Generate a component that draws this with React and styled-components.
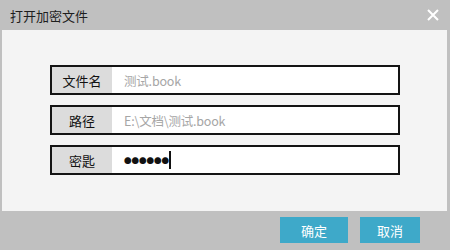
import React from 'react';
import styled, { createGlobalStyle } from 'styled-components';

const GlobalStyle = createGlobalStyle`
    html, body {
        margin: 0;
        padding: 0;
        background: #c0c0c0;
    }
    body {
        font-family: "Noto Sans CJK SC", "Noto Sans", sans-serif;
    }
`;

const fields = [
    { label: '文件名', value: '测试.book' },
    { label: '路径', value: 'E:\\文档\\测试.book' },
    { label: '密匙', secret: true },
];

function App() {
    return (
        <>
            <GlobalStyle />
            <Dialog>
                <TitleBar>
                    <span>打开加密文件</span>
                    <CloseButton aria-label="close">
                        <svg width="12" height="12" viewBox="0 0 12 12">
                            <path d="M1 1 L11 11 M11 1 L1 11" stroke="#fff" strokeWidth="2" />
                        </svg>
                    </CloseButton>
                </TitleBar>
                <Body>
                    {fields.map((f) => (
                        <FieldRow key={f.label}>
                            <Label>{f.label}</Label>
                            {f.secret ? (
                                <Value>
                                    <Dots>●●●●●●</Dots>
                                    <Caret />
                                </Value>
                            ) : (
                                <Value muted>{f.value}</Value>
                            )}
                        </FieldRow>
                    ))}
                </Body>
                <Footer>
                    <Button wide>确定</Button>
                    <Button>取消</Button>
                </Footer>
            </Dialog>
        </>
    );
}

const Dialog = styled.div`
    width: 450px;
    height: 250px;
    display: flex;
    flex-direction: column;
    background: #c0c0c0;
    overflow: hidden;
`;

const TitleBar = styled.div`
    height: 30px;
    display: flex;
    align-items: center;
    justify-content: space-between;
    padding: 0 10px 0 10px;
    font-size: 13px;
    color: #1e1e1e;
`;

const CloseButton = styled.div`
    display: flex;
    align-items: center;
    justify-content: center;
    width: 16px;
    height: 16px;
    margin-right: -1px;
`;

const Body = styled.div`
    flex: 1;
    margin: 0 3px 0 2px;
    background: #f4f4f4;
    display: flex;
    flex-direction: column;
    gap: 10px;
    padding: 35px 0 0 48px;
`;

const FieldRow = styled.div`
    width: 350px;
    height: 30px;
    box-sizing: border-box;
    border: 2px solid #141414;
    display: flex;
    background: #fff;
`;

const Label = styled.div`
    width: 60px;
    background: #dcdcdc;
    display: flex;
    align-items: center;
    justify-content: center;
    font-size: 13px;
    color: #111;
`;

const Value = styled.div`
    flex: 1;
    display: flex;
    align-items: center;
    padding-left: 12px;
    font-size: 12.5px;
    letter-spacing: -0.2px;
    color: ${(p) => (p.muted ? '#a6a6a6' : '#111')};
`;

const Dots = styled.span`
    font-size: 7.5px;
    letter-spacing: 0;
    color: #111;
`;

const Caret = styled.span`
    width: 1.5px;
    height: 18px;
    background: #111;
    margin-left: 0px;
`;

const Footer = styled.div`
    height: 39px;
    display: flex;
    justify-content: flex-end;
    align-items: flex-start;
    gap: 12px;
    padding: 6px 30px 0 0;
    box-sizing: border-box;
`;

const Button = styled.div`
    width: ${(p) => (p.wide ? '68px' : '60px')};
    height: 26px;
    background: #3ea9c9;
    color: #fff;
    font-size: 13px;
    display: flex;
    align-items: center;
    justify-content: center;
`;

export default App;
